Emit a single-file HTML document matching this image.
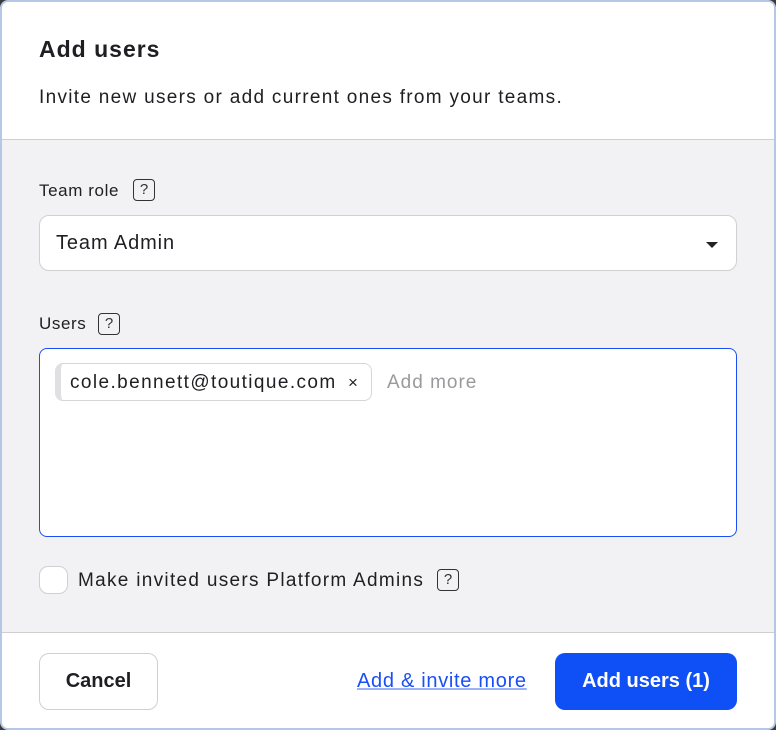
<!DOCTYPE html>
<html><head><style>
*{box-sizing:border-box;margin:0;padding:0}
body{width:776px;height:730px;background:#3a3a3a;font-family:"Liberation Sans",sans-serif;color:#1f1f23;position:relative;overflow:hidden}
.dlg{position:absolute;left:0;top:0;width:776px;height:730px;background:#f2f2f4;border:2px solid #b5c6e6;border-radius:8px;overflow:hidden}
.hdr{position:absolute;left:0;top:0;width:100%;height:138px;background:#fff;border-bottom:1px solid #cfcfd3}
.ftr{position:absolute;left:0;top:630px;width:100%;height:100px;background:#fff;border-top:1px solid #cfcfd3}
.a{position:absolute;white-space:nowrap}
.q{position:absolute;width:22px;height:22px;border:1.5px solid #333;border-radius:4px;font-size:15px;text-align:center;line-height:19px;color:#333}
</style></head><body>
<div class="dlg">
<div class="hdr">
<div class="a" style="left:37px;top:34px;font-size:23px;font-weight:bold;letter-spacing:1px">Add users</div>
<div class="a" style="left:37px;top:85px;font-size:19px;letter-spacing:1.3px">Invite new users or add current ones from your teams.</div>
</div>
<div class="a" style="left:37px;top:179px;font-size:17px;letter-spacing:0.6px">Team role</div>
<div class="q" style="left:131px;top:177px">?</div>
<div class="a" style="left:37px;top:213px;width:698px;height:56px;background:#fff;border:1px solid #d0d0d4;border-radius:10px"></div>
<div class="a" style="left:54px;top:230px;font-size:20px;letter-spacing:0.9px">Team Admin</div>
<div class="a" style="left:704px;top:240px;width:0;height:0;border-left:6px solid transparent;border-right:6px solid transparent;border-top:6px solid #222"></div>
<div class="a" style="left:37px;top:312px;font-size:17px;letter-spacing:0.6px">Users</div>
<div class="q" style="left:96px;top:311px">?</div>
<div class="a" style="left:37px;top:346px;width:698px;height:189px;background:#fff;border:1px solid #1a4ff5;border-radius:8px"></div>
<div class="a" style="left:53px;top:361px;width:317px;height:38px;background:#fff;border:1px solid #d6d6da;border-left:6px solid #e0e0e3;border-radius:8px"></div>
<div class="a" style="left:68px;top:370px;font-size:19px;letter-spacing:1.4px">cole.bennett@toutique.com</div>
<div class="a" style="left:346px;top:371px;font-size:17px">×</div>
<div class="a" style="left:385px;top:370px;font-size:19px;color:#9a9a9e;letter-spacing:1px">Add more</div>
<div class="a" style="left:37px;top:564px;width:29px;height:28px;background:#fff;border:1px solid #d0d0d4;border-radius:9px"></div>
<div class="a" style="left:76px;top:568px;font-size:19px;letter-spacing:1.3px">Make invited users Platform Admins</div>
<div class="q" style="left:435px;top:567px">?</div>
<div class="ftr">
<div class="a" style="left:37px;top:20px;width:119px;height:57px;border:1px solid #d0d0d4;border-radius:10px;font-size:20px;font-weight:bold;text-align:center;line-height:55px">Cancel</div>
<div class="a" style="left:355px;top:37px;font-size:20px;color:#1a4ff5;text-decoration:underline;text-decoration-color:#9bb3f5;letter-spacing:0.7px">Add &amp; invite more</div>
<div class="a" style="left:553px;top:20px;width:182px;height:57px;background:#0f4ff6;border-radius:10px;font-size:20px;font-weight:bold;color:#fff;text-align:center;line-height:57px">Add users (1)</div>
</div>
</div>
</body></html>
